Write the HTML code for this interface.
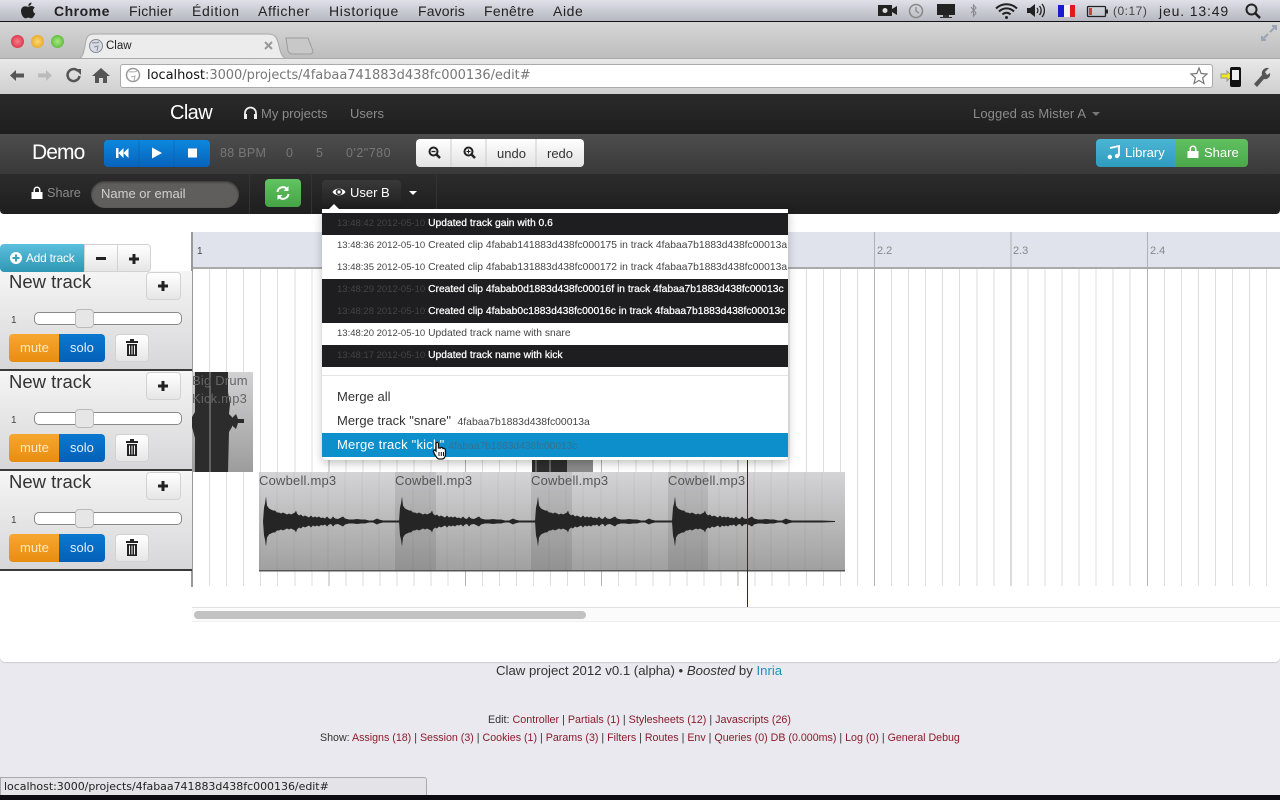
<!DOCTYPE html>
<html><head><meta charset="utf-8"><title>Claw</title>
<style>
html,body{margin:0;padding:0;width:1280px;height:800px;overflow:hidden;background:#e9e9ef;font-family:"Liberation Sans",sans-serif}
.a,.t{position:absolute;box-sizing:border-box}
.t{white-space:nowrap;line-height:1}
.mb{font-size:14px;top:4px;color:#222;font-family:"Liberation Sans",sans-serif}
.dark{background:linear-gradient(#2c2b2c,#201f20)}
.btn{background:linear-gradient(#fff,#e6e6e6);border:1px solid #d2d2d2;border-radius:4px}
.row{position:absolute;box-sizing:border-box;left:322px;width:466px;height:22px;font-size:10.300px;line-height:21px;padding-left:15px;white-space:nowrap;overflow:hidden;color:#444;background:#fff}
.row i{font-style:normal;font-size:9.500px}
.row.d{background:#1e1d1f;color:#fff;-webkit-text-stroke:.25px #fff}
.row.d i{color:#444;-webkit-text-stroke:0}
.panel{position:absolute;box-sizing:border-box;left:0;width:192px;height:100px;background:linear-gradient(#f5f5f5,#d7d6d8);border-bottom:2px solid #3a3a3a}
.clipname{font-size:13px;color:#555;letter-spacing:.2px}
a{color:#8c1c2c;text-decoration:none}
</style></head><body>
<svg width="0" height="0" style="position:absolute"><defs>
<polygon id="wave" points="0,0 1,-14 2,-18 3,-25 4,-16 6,-13 8,-12 10,-11 12,-11 14,-9 16,-9 18,-8 20,-9 22,-8 24,-7 26,-8 28,-7 30,-8 32,-9 33,-11 34,-8 36,-6 38,-7 40,-5 42,-6 44,-5 46,-4 48,-6 50,-4 52,-5 54,-4 56,-5 58,-3.5 60,-4 62,-3 64,-5 66,-3 68,-2.5 70,-5 72,-3 75,-2.5 78,-4 80,-5 82,-3 86,-2 90,-2 94,-2.5 98,-2 102,-2 106,-1 110,-1 114,-3 116,-2 120,-1 128,-1 136,-1 150,-1 163,-.5 163,.5 150,1 136,1 128,1 120,1 116,2 114,3 110,1 106,1 102,2 98,2 94,2.5 90,2 86,2 82,3 80,5 78,4 75,2.5 72,3 70,5 68,2.5 66,3 64,5 62,3 60,4 58,3.5 56,5 54,4 52,5 50,4 48,6 46,4 44,5 42,6 40,5 38,7 36,6 34,8 33,11 32,9 30,8 28,7 26,8 24,7 22,8 20,9 18,8 16,9 14,9 12,11 10,11 8,12 6,13 4,16 3,25 2,18 1,14"/>
<g id="plus"><path d="M-5,-1.5H-1.5V-5H1.5V-1.5H5V1.5H1.5V5H-1.5V1.5H-5Z" fill="#222"/></g>
<g id="trash" fill="#222"><path d="M-6,-7H-2V-9H2V-7H6V-5H-6Z"/><path d="M-5,-4H5V8H-5ZM-3,-2.500V6.500H-2V-2.500ZM-.5,-2.500V6.500H.5V-2.500ZM2,-2.500V6.500H3V-2.500Z" fill-rule="evenodd"/></g>
<g id="lock" fill="#fff"><path d="M-5.500,-1H5.500V6H-5.500Z"/><path d="M-3.500,-1V-3A3.500,3.500 0 0 1 3.500,-3V-1H2V-3A2,2 0 0 0 -2,-3V-1Z"/></g>
</defs></svg>

<!-- mac menu bar -->
<div class="a" style="left:0;top:0;width:1280px;height:21px;background:linear-gradient(#dfe0e8,#b6b7c0)"></div>
<div class="a" style="left:0;top:21px;width:1280px;height:1px;background:#111"></div>
<svg class="a" style="left:20px;top:2px" width="16" height="17" viewBox="0 0 16 17"><path d="M11.500,.5C11.600,2.500 10,4 8.300,4C8.100,2.300 9.800,.6 11.500,.5ZM8.200,4.800C9,4.800 10,4 11.500,4C12.700,4 14,4.700 14.700,5.800C12.300,7.200 12.800,10.500 15.200,11.500C14.500,13.500 13,16.300 11.300,16.300C10.200,16.300 9.800,15.600 8.400,15.600C7,15.600 6.500,16.300 5.400,16.300C3.500,16.300 1,12.500 1,9C1,6 3,4.200 5,4.200C6.300,4.200 7.400,4.800 8.200,4.800Z" fill="#222"/></svg>
<div class="t mb" style="left:54px;font-weight:bold;letter-spacing:.5px">Chrome</div>
<div class="t mb" style="left:129px;letter-spacing:.3px">Fichier</div>
<div class="t mb" style="left:192px;letter-spacing:.7px">Édition</div>
<div class="t mb" style="left:258px;letter-spacing:.6px">Afficher</div>
<div class="t mb" style="left:329px;letter-spacing:.7px">Historique</div>
<div class="t mb" style="left:418px;letter-spacing:.15px">Favoris</div>
<div class="t mb" style="left:484px;letter-spacing:.3px">Fenêtre</div>
<div class="t mb" style="left:553px;letter-spacing:.6px">Aide</div>
<svg class="a" style="left:875px;top:0" width="240" height="21" viewBox="875 0 240 21">
<path d="M878,5H892V16H878Z M892,9L897,6V15L892,12Z" fill="#222"/><circle cx="885" cy="10.500" r="2.500" fill="#ddd"/>
<circle cx="916" cy="11" r="6.500" fill="none" stroke="#888" stroke-width="1.500"/><path d="M916,7V11L919,13" fill="none" stroke="#888" stroke-width="1.300"/>
<path d="M937,4H955V15H937Z" fill="#222"/><path d="M943,15H949V17H952V18H940V17H943Z" fill="#333"/>
<path d="M971,7L976,13L973.500,16V5L976,8L971,13" fill="none" stroke="#8a8a90" stroke-width="1.100"/>
<path d="M996,8.500A15,15 0 0 1 1017,8.500M999,11.500A10.500,10.500 0 0 1 1014,11.500M1002.500,14.500A5.500,5.500 0 0 1 1010.500,14.500" fill="none" stroke="#222" stroke-width="2"/><circle cx="1006.500" cy="17.500" r="1.500" fill="#222"/>
<path d="M1027,8H1030L1035,4V17L1030,13H1027Z" fill="#222"/><path d="M1037,8A4,4 0 0 1 1037,13M1039.500,6A7,7 0 0 1 1039.500,15M1042,4A10,10 0 0 1 1042,17" fill="none" stroke="#222" stroke-width="1.300"/>
<rect x="1058" y="5" width="6" height="12" fill="#1a1ad0"/><rect x="1064" y="5" width="6" height="12" fill="#f4f4f4"/><rect x="1070" y="5" width="5" height="12" fill="#e01a20"/>
<rect x="1087.500" y="6.500" width="18" height="10" rx="1" fill="none" stroke="#222" stroke-width="1.300"/><rect x="1089" y="8" width="3" height="7" fill="#c43"/><rect x="1106" y="9.500" width="2" height="4" fill="#222"/>
</svg>
<div class="t" style="left:1113px;top:5px;font-size:12px;color:#444;letter-spacing:.5px">(0:17)</div>
<div class="t mb" style="left:1159px;letter-spacing:.85px">jeu. 13:49</div>
<svg class="a" style="left:1243px;top:1px" width="20" height="20"><circle cx="8.500" cy="8.500" r="5" fill="none" stroke="#222" stroke-width="2"/><path d="M12,12L17,17" stroke="#222" stroke-width="2.500"/></svg>

<!-- chrome tab strip -->
<div class="a" style="left:0;top:22px;width:1280px;height:36px;background:linear-gradient(#d6d6d6,#bdbdbd)"></div>
<div class="a" style="left:11px;top:35px;width:13px;height:13px;border-radius:50%;background:radial-gradient(#f7808c,#d01c34)"></div>
<div class="a" style="left:31px;top:35px;width:13px;height:13px;border-radius:50%;background:radial-gradient(#fbd870,#e09c14)"></div>
<div class="a" style="left:51px;top:35px;width:13px;height:13px;border-radius:50%;background:radial-gradient(#a8ea80,#48aa28)"></div>
<svg class="a" style="left:72px;top:32px" width="250" height="28"><path d="M4,27C10,27 11,24 13,14C14,5 16,2 22,2H196C203,2 205,5 207,14C209,24 212,27 216,27Z" fill="#ececec" stroke="#a8a8a8"/><path d="M214,6H236L241,19C241,21 240,22 238,22H220C218,22 217,21 216,19Z" fill="#c8c8c8" stroke="#9c9c9c"/><path d="M193,10L200,17M200,10L193,17" stroke="#999" stroke-width="2"/><circle cx="24" cy="14" r="6.500" fill="#d8dce4" stroke="#889" /><path d="M20,11C23,10 25,12 27,10M22,15L26,14L25,19" fill="none" stroke="#889"/></svg>
<div class="t" style="left:106px;top:41px;font-size:11.500px;color:#222">Claw</div>
<svg class="a" style="left:1260px;top:25px" width="18" height="16"><path d="M10,7L16,1M12,1H16V5M8,9L2,15M2,11V15H6" fill="none" stroke="#9aa4b4" stroke-width="2"/></svg>

<!-- chrome toolbar -->
<div class="a" style="left:0;top:58px;width:1280px;height:36px;background:linear-gradient(#e8e8e8,#cfcfcf);border-top:1px solid #aaa"></div>
<svg class="a" style="left:0;top:60px" width="120" height="32"><path d="M10,15.500L16,10V13.500H24V17.500H16V21Z" fill="#555"/><path d="M52,15.500L46,10V13.500H38V17.500H46V21Z" fill="#bbb"/><path d="M78,11A6,6 0 1 0 79.500,16" fill="none" stroke="#555" stroke-width="2.500"/><path d="M75,9H81V15Z" fill="#555"/><path d="M101,8L110,16H107V23H103V18H99V23H95V16H92Z" fill="#555"/></svg>
<div class="a" style="left:120px;top:64px;width:1093px;height:24px;background:#fff;border:1px solid #aaa;border-radius:3px"></div>
<svg class="a" style="left:125px;top:67px" width="16" height="16"><circle cx="8" cy="8" r="6.500" fill="#fff" stroke="#999" stroke-width="1.500"/><path d="M4,5C7,4 9,6 12,4M6,10L10,9L9,14" fill="none" stroke="#aaa"/></svg>
<div class="t" style="left:147px;top:69px;color:#777;font-family:'DejaVu Sans',sans-serif;letter-spacing:-.04px;font-size:13px"><span style="color:#111">localhost</span>:3000/projects/4fabaa741883d438fc000136/edit#</div>
<svg class="a" style="left:1189px;top:66px" width="20" height="20"><path d="M10,2L12.200,7.500L18,8L13.600,11.800L15,17.500L10,14.400L5,17.500L6.400,11.800L2,8L7.800,7.500Z" fill="#fff" stroke="#777" stroke-width="1.200"/></svg>
<svg class="a" style="left:1220px;top:64px" width="52" height="26"><path d="M1,10H7V7L12,12L7,17V14H1Z" fill="#f0e818" stroke="#998"/><rect x="10" y="3" width="11" height="20" rx="2" fill="#111"/><rect x="12" y="6" width="7" height="10" fill="#eee"/><path d="M34,20L42,11C41,7 44,3 49,4L45,8L47,11L50,9C51,13 47,16 44,15L37,23Z" fill="#555"/></svg>

<!-- app nav -->
<div class="a" style="left:0;top:94px;width:1280px;height:40px;background:linear-gradient(#2b2a2b,#1f1e1f)"></div>
<div class="t" style="left:170px;top:103px;font-size:20px;color:#fff;letter-spacing:-.6px">Claw</div>
<svg class="a" style="left:243px;top:106px" width="15" height="14"><path d="M2,9V7A5.500,5.500 0 0 1 13,7V9" fill="none" stroke="#eee" stroke-width="1.800"/><rect x="1" y="8" width="3" height="5" fill="#eee"/><rect x="11" y="8" width="3" height="5" fill="#eee"/></svg>
<div class="t" style="left:261px;top:107px;font-size:13px;color:#8c8c8c">My projects</div>
<div class="t" style="left:350px;top:107px;font-size:13px;color:#8c8c8c">Users</div>
<div class="t" style="left:973px;top:107px;font-size:13px;color:#8c8c8c;letter-spacing:.1px">Logged as Mister A</div>
<div class="a" style="left:1092px;top:112px;border:4px solid transparent;border-top-color:#777;border-bottom:0"></div>

<!-- sub bar -->
<div class="a" style="left:0;top:134px;width:1280px;height:40px;background:linear-gradient(#4e4d4e,#3a393a)"></div>
<div class="t" style="left:32px;top:142px;font-size:21px;color:#fff;letter-spacing:-.9px">Demo</div>
<div class="a" style="left:104px;top:140px;width:106px;height:27px;border-radius:4px;background:linear-gradient(#0c88de,#0862bb)"></div>
<svg class="a" style="left:104px;top:140px" width="106" height="27"><path d="M35,0V27M70,0V27" stroke="#0a5aa8" stroke-opacity=".5"/><path d="M12,8H14.500V18H12ZM14.500,13L19.500,8V18ZM19.500,13L24.500,8V18Z" fill="#fff"/><path d="M48,7.500L58,13L48,18.500Z" fill="#fff"/><rect x="84" y="8.500" width="9" height="9" fill="#fff"/></svg>
<div class="t" style="left:220px;top:147px;font-size:12.500px;color:#777;letter-spacing:.3px">88 BPM</div>
<div class="t" style="left:286px;top:147px;font-size:12.500px;color:#777">0</div>
<div class="t" style="left:316px;top:147px;font-size:12.500px;color:#777">5</div>
<div class="t" style="left:346px;top:147px;font-size:12.500px;color:#777;letter-spacing:.5px">0'2"780</div>
<div class="a" style="left:416px;top:139px;width:168px;height:28px;border-radius:4px;background:linear-gradient(#fff,#e2e2e2)"></div>
<svg class="a" style="left:416px;top:139px" width="168" height="28"><path d="M35,0V28M70,0V28M120,0V28" stroke="#ccc"/><circle cx="17.500" cy="12.500" r="4" fill="none" stroke="#222" stroke-width="2"/><path d="M20.500,15.500L24,19" stroke="#222" stroke-width="2.500"/><path d="M15.500,12.500H19.500" stroke="#222" stroke-width="1.300"/><circle cx="52.500" cy="12.500" r="4" fill="none" stroke="#222" stroke-width="2"/><path d="M55.500,15.500L59,19" stroke="#222" stroke-width="2.500"/><path d="M50.500,12.500H54.500M52.500,10.500V14.500" stroke="#222" stroke-width="1.100"/></svg>
<div class="t" style="left:497px;top:147px;font-size:13px;color:#333">undo</div>
<div class="t" style="left:547px;top:147px;font-size:13px;color:#333">redo</div>
<div class="a" style="left:1096px;top:139px;width:79px;height:28px;border-radius:4px 0 0 4px;background:linear-gradient(#4ab5d4,#2f9bbd)"></div>
<div class="a" style="left:1175px;top:139px;width:73px;height:28px;border-radius:0 4px 4px 0;background:linear-gradient(#60c060,#4aa84a)"></div>
<svg class="a" style="left:1107px;top:145px" width="14" height="15"><path d="M3,3L12,1V11" fill="none" stroke="#fff" stroke-width="1.800"/><circle cx="2.800" cy="12" r="2.200" fill="#fff"/><circle cx="10" cy="11" r="2.200" fill="#fff"/></svg>
<div class="t" style="left:1125px;top:146px;font-size:13px;color:#fff">Library</div>
<svg class="a" style="left:1186px;top:145px" width="14" height="15"><use href="#lock" x="7" y="7"/></svg>
<div class="t" style="left:1204px;top:146px;font-size:13px;color:#fff">Share</div>

<!-- dark bar -->
<div class="a" style="left:0;top:174px;width:1280px;height:40px;border-radius:0 0 4px 4px;background:linear-gradient(#2d2c2d,#1f1e1f)"></div>
<svg class="a" style="left:30px;top:186px" width="14" height="15"><use href="#lock" x="7" y="7"/></svg>
<div class="t" style="left:47px;top:187px;font-size:12.700px;color:#8a8a8a">Share</div>
<div class="a" style="left:91px;top:181px;width:148px;height:27px;border-radius:14px;background:#5f5e5c;box-shadow:inset 0 1px 2px #333"></div>
<div class="t" style="left:101px;top:187px;font-size:13px;color:#d0d0d0">Name or email</div>
<div class="a" style="left:249px;top:174px;width:1px;height:40px;background:#333"></div>
<div class="a" style="left:265px;top:179px;width:36px;height:28px;border-radius:4px;background:linear-gradient(#62c462,#45a345)"></div>
<svg class="a" style="left:275px;top:185px" width="16" height="16"><path d="M2.500,7A5.500,5.500 0 0 1 12,4M13.500,9A5.500,5.500 0 0 1 4,12" fill="none" stroke="#fff" stroke-width="2"/><path d="M13.500,1V6H8.500ZM2.500,15V10H7.500Z" fill="#fff"/></svg>
<div class="a" style="left:311px;top:174px;width:1px;height:40px;background:#333"></div>
<div class="a" style="left:322px;top:180px;width:79px;height:28px;border-radius:4px 4px 0 0;background:linear-gradient(#3a393a,#201f20)"></div>
<svg class="a" style="left:332px;top:185px" width="14" height="14"><path d="M.5,7C3,2.500 11,2.500 13.500,7C11,11.500 3,11.500 .5,7Z" fill="#fff"/><circle cx="7" cy="7" r="3.200" fill="#333"/><circle cx="7" cy="7" r="1.600" fill="#fff"/></svg>
<div class="t" style="left:350px;top:186px;font-size:13px;color:#fff">User B</div>
<div class="a" style="left:409px;top:191px;border:4px solid transparent;border-top-color:#fff;border-bottom:0"></div>
<div class="a" style="left:436px;top:174px;width:1px;height:40px;background:#333"></div>

<!-- main white area -->
<div class="a" style="left:0;top:214px;width:1280px;height:448px;background:#fff;border-radius:0 0 5px 5px;box-shadow:0 1px 1px #ccc"></div>

<!-- timeline -->
<div class="a" style="left:192px;top:232px;width:1088px;height:36px;background:#e0e3ec"></div>
<div class="a" style="left:192px;top:232px;width:1088px;height:36px;background:repeating-linear-gradient(90deg,#b0b0b8 0,#b0b0b8 1px,transparent 1px,transparent 136.400px)"></div>
<div class="a" style="left:192px;top:268px;width:1088px;height:318px;background:repeating-linear-gradient(90deg,#b4b4b4 0,#b4b4b4 1px,transparent 1px,transparent 136.400px),repeating-linear-gradient(90deg,#dedede 0,#dedede 1px,transparent 1px,transparent 17.050px)"></div>
<div class="a" style="left:192px;top:267px;width:1088px;height:2px;background:#aaa"></div>
<div class="a" style="left:191px;top:232px;width:2px;height:355px;background:#999"></div>
<div class="t" style="left:197px;top:247px;font-size:10px;color:#444">1</div>
<div class="t" style="left:877px;top:246px;font-size:11px;color:#888">2.2</div>
<div class="t" style="left:1013px;top:246px;font-size:11px;color:#888">2.3</div>
<div class="t" style="left:1150px;top:246px;font-size:11px;color:#888">2.4</div>

<!-- clips -->
<svg class="a" style="left:192px;top:372px" width="62" height="100"><defs><linearGradient id="g1" x1="0" y1="0" x2="0" y2="1"><stop offset="0" stop-color="#d2d2d4"/><stop offset="1" stop-color="#9c9c9c"/></linearGradient></defs><rect x="0" width="61" height="100" fill="url(#g1)"/><path d="M3,0H36V20L38,32L37,42L40,45V55L37,60L36,100H3V66L0,55V45L3,40Z" fill="#2c2c2c"/><path d="M36,50L44,42L46,47H52V51H46L44,57Z" fill="#2c2c2c"/><path d="M18,0V100" stroke="#b5b5b5" stroke-width=".8"/></svg>
<div class="t" style="left:192px;top:372px;font-size:13px;color:#666;line-height:18px;letter-spacing:.2px">Big Drum<br>Kick.mp3</div>
<svg class="a" style="left:532px;top:460px" width="62" height="12"><rect width="61" height="12" fill="#8a8a8a"/><rect width="35" height="12" fill="#2e2e2e"/><path d="M18,0V12M4,0V12" stroke="#999"/></svg>

<svg class="a" style="left:259px;top:472px" width="587" height="100"><defs><linearGradient id="g2" x1="0" y1="0" x2="0" y2="1"><stop offset="0" stop-color="#d4d4d6"/><stop offset="1" stop-color="#a0a0a0"/></linearGradient></defs>
<rect width="586" height="99" fill="url(#g2)"/>
<path d="M136,0H177V99H136ZM272,0H313V99H272ZM409,0H449V99H409Z" fill="#000" fill-opacity=".09"/>
<path d="M69,0V99M205,0V99M342,0V99M478,0V99M1,0V99M18,0V99M35,0V99M52,0V99M86,0V99M103,0V99M120,0V99M154,0V99M171,0V99M188,0V99M222,0V99M239,0V99M256,0V99M290,0V99M307,0V99M324,0V99M358,0V99M375,0V99M392,0V99M426,0V99M443,0V99M460,0V99M495,0V99M512,0V99M529,0V99M546,0V99M563,0V99" stroke="#000" stroke-opacity=".05"/>
<g fill="#252525"><use href="#wave" x="4" y="49.500"/><use href="#wave" x="140" y="49.500"/><use href="#wave" x="276" y="49.500"/><use href="#wave" x="413" y="49.500"/></g>
<rect y="98" width="586" height="1.500" fill="#555"/></svg>
<div class="t clipname" style="left:259px;top:474px">Cowbell.mp3</div>
<div class="t clipname" style="left:395px;top:474px">Cowbell.mp3</div>
<div class="t clipname" style="left:531px;top:474px">Cowbell.mp3</div>
<div class="t clipname" style="left:668px;top:474px">Cowbell.mp3</div>

<!-- playhead -->
<div class="a" style="left:747px;top:268px;width:1px;height:339px;background:#1a1ac8"></div>

<!-- scrollbar -->
<div class="a" style="left:192px;top:607px;width:1088px;height:15px;background:#fbfbfb;border-top:1px solid #e0e0e0;border-bottom:1px solid #eee"></div>
<div class="a" style="left:194px;top:611px;width:392px;height:8px;border-radius:4px;background:#c2c2c2"></div>

<!-- tracks -->
<div class="panel" style="top:271px"></div>
<div class="panel" style="top:371px"></div>
<div class="panel" style="top:471px"></div>

<div class="a" style="left:0;top:244px;width:85px;height:28px;border-radius:4px 0 0 4px;background:linear-gradient(#5bc0de,#2f96b4)"></div>
<svg class="a" style="left:9px;top:251px" width="14" height="14"><circle cx="7" cy="7" r="6" fill="#fff"/><path d="M3.500,7H10.500M7,3.500V10.500" stroke="#3aa0bf" stroke-width="2"/></svg>
<div class="t" style="left:26px;top:253px;font-size:11.800px;color:#fff;letter-spacing:-.15px">Add track</div>
<div class="a btn" style="left:84px;top:244px;width:34px;height:28px;border-radius:0"></div>
<div class="a btn" style="left:117px;top:244px;width:34px;height:28px;border-radius:0 4px 4px 0"></div>
<div class="a" style="left:96px;top:257px;width:10px;height:3px;background:#222"></div>
<svg class="a" style="left:124px;top:249px" width="20" height="20"><use href="#plus" x="10" y="10"/></svg>

<!-- track 1 -->
<div class="t" style="left:9px;top:273px;font-size:18.500px;color:#333">New track</div>
<div class="a btn" style="left:146px;top:272px;width:35px;height:28px"></div>
<svg class="a" style="left:153px;top:276px" width="20" height="20"><use href="#plus" x="10" y="10"/></svg>
<div class="t" style="left:11px;top:316px;font-size:10px;color:#444">1</div>
<div class="a" style="left:34px;top:312px;width:148px;height:13px;background:#fff;border:1px solid #888;border-radius:5px"></div>
<div class="a" style="left:75px;top:309px;width:19px;height:19px;background:#e6e6e6;border:1px solid #bbb;border-radius:4px"></div>
<div class="a" style="left:9px;top:334px;width:50px;height:28px;border-radius:4px 0 0 4px;background:linear-gradient(#f7a730,#e88d10)"></div>
<div class="a" style="left:59px;top:334px;width:46px;height:28px;border-radius:0 4px 4px 0;background:linear-gradient(#0a78d0,#0560b8)"></div>
<div class="t" style="left:20px;top:341px;font-size:13px;color:#fde8c4">mute</div>
<div class="t" style="left:70px;top:341px;font-size:13px;color:#e4f0fc">solo</div>
<div class="a btn" style="left:115px;top:334px;width:34px;height:28px"></div>
<svg class="a" style="left:122px;top:338px" width="20" height="20"><use href="#trash" x="10" y="10"/></svg>

<!-- track 2 -->
<div class="t" style="left:9px;top:373px;font-size:18.500px;color:#333">New track</div>
<div class="a btn" style="left:146px;top:372px;width:35px;height:28px"></div>
<svg class="a" style="left:153px;top:376px" width="20" height="20"><use href="#plus" x="10" y="10"/></svg>
<div class="t" style="left:11px;top:416px;font-size:10px;color:#444">1</div>
<div class="a" style="left:34px;top:412px;width:148px;height:13px;background:#fff;border:1px solid #888;border-radius:5px"></div>
<div class="a" style="left:75px;top:409px;width:19px;height:19px;background:#e6e6e6;border:1px solid #bbb;border-radius:4px"></div>
<div class="a" style="left:9px;top:434px;width:50px;height:28px;border-radius:4px 0 0 4px;background:linear-gradient(#f7a730,#e88d10)"></div>
<div class="a" style="left:59px;top:434px;width:46px;height:28px;border-radius:0 4px 4px 0;background:linear-gradient(#0a78d0,#0560b8)"></div>
<div class="t" style="left:20px;top:441px;font-size:13px;color:#fde8c4">mute</div>
<div class="t" style="left:70px;top:441px;font-size:13px;color:#e4f0fc">solo</div>
<div class="a btn" style="left:115px;top:434px;width:34px;height:28px"></div>
<svg class="a" style="left:122px;top:438px" width="20" height="20"><use href="#trash" x="10" y="10"/></svg>

<!-- track 3 -->
<div class="t" style="left:9px;top:473px;font-size:18.500px;color:#333">New track</div>
<div class="a btn" style="left:146px;top:472px;width:35px;height:28px"></div>
<svg class="a" style="left:153px;top:476px" width="20" height="20"><use href="#plus" x="10" y="10"/></svg>
<div class="t" style="left:11px;top:516px;font-size:10px;color:#444">1</div>
<div class="a" style="left:34px;top:512px;width:148px;height:13px;background:#fff;border:1px solid #888;border-radius:5px"></div>
<div class="a" style="left:75px;top:509px;width:19px;height:19px;background:#e6e6e6;border:1px solid #bbb;border-radius:4px"></div>
<div class="a" style="left:9px;top:534px;width:50px;height:28px;border-radius:4px 0 0 4px;background:linear-gradient(#f7a730,#e88d10)"></div>
<div class="a" style="left:59px;top:534px;width:46px;height:28px;border-radius:0 4px 4px 0;background:linear-gradient(#0a78d0,#0560b8)"></div>
<div class="t" style="left:20px;top:541px;font-size:13px;color:#fde8c4">mute</div>
<div class="t" style="left:70px;top:541px;font-size:13px;color:#e4f0fc">solo</div>
<div class="a btn" style="left:115px;top:534px;width:34px;height:28px"></div>
<svg class="a" style="left:122px;top:538px" width="20" height="20"><use href="#trash" x="10" y="10"/></svg>

<!-- dropdown -->
<div class="a" style="left:322px;top:209px;width:466px;height:251px;background:#fff;box-shadow:0 3px 9px rgba(0,0,0,.25);border-radius:0 0 4px 4px"></div>
<div class="a" style="left:328px;top:204px;border:6px solid transparent;border-bottom-color:#fff;border-top:0"></div>
<div class="row d" style="top:213px"><i>13:48:42 2012-05-10</i> Updated track gain with 0.6</div>
<div class="row" style="top:235px"><i>13:48:36 2012-05-10</i> Created clip 4fabab141883d438fc000175 in track 4fabaa7b1883d438fc00013a</div>
<div class="row" style="top:257px"><i>13:48:35 2012-05-10</i> Created clip 4fabab131883d438fc000172 in track 4fabaa7b1883d438fc00013a</div>
<div class="row d" style="top:279px"><i>13:48:29 2012-05-10</i> Created clip 4fabab0d1883d438fc00016f in track 4fabaa7b1883d438fc00013c</div>
<div class="row d" style="top:301px"><i>13:48:28 2012-05-10</i> Created clip 4fabab0c1883d438fc00016c in track 4fabaa7b1883d438fc00013c</div>
<div class="row" style="top:323px"><i>13:48:20 2012-05-10</i> Updated track name with snare</div>
<div class="row d" style="top:345px"><i>13:48:17 2012-05-10</i> Updated track name with kick</div>
<div class="a" style="left:322px;top:375px;width:466px;height:1px;background:#e5e5e5"></div>
<div class="t" style="left:337px;top:390px;font-size:13px;color:#333">Merge all</div>
<div class="t" style="left:337px;top:414px;font-size:13px;color:#333">Merge track "snare" <span style="font-size:10.400px;color:#444">&nbsp;4fabaa7b1883d438fc00013a</span></div>
<div class="a" style="left:322px;top:433px;width:466px;height:24px;background:#0d8fcb"></div>
<div class="t" style="left:337px;top:438px;font-size:13px;color:#fff;letter-spacing:.2px">Merge track "kick" <span style="font-size:10.200px;color:#3a6f8e;letter-spacing:0">4fabaa7b1883d438fc00013c</span></div>
<svg class="a" style="left:432px;top:441px" width="16" height="19"><path d="M4,8V2.500C4,1 6.500,1 6.500,2.500V7L8.500,7C9,6 10.500,6 11,7.500C12,7 13.500,7.500 13.500,9.500V13C13.500,16 12,18 10,18H7C5,18 4.500,16 3,14L1.500,11C1,9.500 2.500,8.500 4,10Z" fill="#fff" stroke="#111" stroke-width="1.300"/><path d="M7,11V15M9.300,11V15M11.500,11V15" stroke="#111"/></svg>

<!-- footer -->
<div class="t" style="left:496px;top:664px;font-size:13.200px;color:#333">Claw project 2012 v0.1 (alpha) • <em>Boosted</em> by <span style="color:#1f8fc0">Inria</span></div>
<div class="t" style="left:488px;top:715px;font-size:10.750px;color:#333">Edit: <a>Controller</a> | <a>Partials (1)</a> | <a>Stylesheets (12)</a> | <a>Javascripts (26)</a></div>
<div class="t" style="left:320px;top:733px;font-size:10.670px;color:#333">Show: <a>Assigns (18)</a> | <a>Session (3)</a> | <a>Cookies (1)</a> | <a>Params (3)</a> | <a>Filters</a> | <a>Routes</a> | <a>Env</a> | <a>Queries (0) DB (0.000ms)</a> | <a>Log (0)</a> | <a>General Debug</a></div>

<!-- status bubble -->
<div class="a" style="left:0;top:777px;width:427px;height:18px;background:#e4e4e8;border:1px solid #aaa;border-bottom:0;border-radius:0 3px 0 0"></div>
<div class="t" style="left:4px;top:781px;font-size:11px;color:#222;font-family:'DejaVu Sans',sans-serif;letter-spacing:-.03px">localhost:3000/projects/4fabaa741883d438fc000136/edit#</div>
<div class="a" style="left:0;top:795px;width:1280px;height:5px;background:#0c0c12"></div>
</body></html>
